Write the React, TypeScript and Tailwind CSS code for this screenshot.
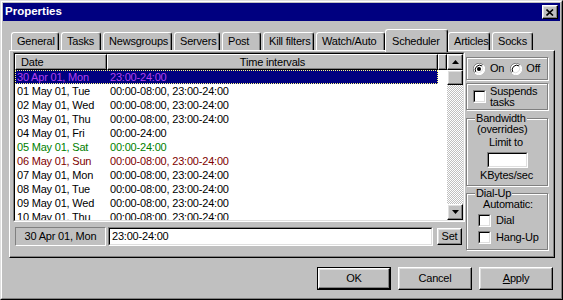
import React from "react";

const raised =
  "border border-white border-r-black border-b-black shadow-[inset_-1px_-1px_0_#808080,inset_1px_1px_0_#dfdfdf]";

type Row = { d: string; t: string; c?: string };

const rows: Row[] = [
  { d: "01 May 01, Tue", t: "00:00-08:00, 23:00-24:00" },
  { d: "02 May 01, Wed", t: "00:00-08:00, 23:00-24:00" },
  { d: "03 May 01, Thu", t: "00:00-08:00, 23:00-24:00" },
  { d: "04 May 01, Fri", t: "00:00-24:00" },
  { d: "05 May 01, Sat", t: "00:00-24:00", c: "text-[#008000]" },
  { d: "06 May 01, Sun", t: "00:00-08:00, 23:00-24:00", c: "text-[#800000]" },
  { d: "07 May 01, Mon", t: "00:00-08:00, 23:00-24:00" },
  { d: "08 May 01, Tue", t: "00:00-08:00, 23:00-24:00" },
  { d: "09 May 01, Wed", t: "00:00-08:00, 23:00-24:00" },
  { d: "10 May 01, Thu", t: "00:00-08:00, 23:00-24:00" },
];

function Check() {
  return (
    <div className="w-[13px] h-[13px] shrink-0 border border-[#808080] border-r-white border-b-white">
      <div className="w-full h-full border border-black border-r-[#dfdfdf] border-b-[#dfdfdf] bg-white" />
    </div>
  );
}

function Radio({ on }: { on?: boolean }) {
  return (
    <svg width="12" height="12" viewBox="0 0 12 12" className="shrink-0">
      <circle cx="6" cy="6" r="5.5" fill="#ffffff" />
      <path d="M10.2 2.1 A5.5 5.5 0 0 0 1.8 9.9" fill="none" stroke="#808080" strokeWidth="1" />
      <path d="M9.2 3 A4.5 4.5 0 0 0 2.8 9" fill="none" stroke="#000000" strokeWidth="1" />
      <path d="M10.2 2.1 A5.5 5.5 0 0 1 1.8 9.9" fill="none" stroke="#ffffff" strokeWidth="1" />
      <path d="M9.2 3 A4.5 4.5 0 0 1 2.8 9" fill="none" stroke="#dfdfdf" strokeWidth="1" />
      {on && <circle cx="6" cy="6" r="2" fill="#000000" />}
    </svg>
  );
}

function Arrow({ up }: { up?: boolean }) {
  return (
    <svg width="7" height="4" viewBox="0 0 7 4">
      {up ? <path d="M3.5 0 L7 4 L0 4 Z" fill="#000" /> : <path d="M0 0 L7 0 L3.5 4 Z" fill="#000" />}
    </svg>
  );
}

const tabs: { n: string; w: string; sel?: boolean }[] = [
  { n: "General", w: "w-[48px]" },
  { n: "Tasks", w: "w-[40px]" },
  { n: "Newsgroups", w: "w-[69px]" },
  { n: "Servers", w: "w-[46px]" },
  { n: "Post", w: "w-[39px]" },
  { n: "Kill filters", w: "w-[51px]" },
  { n: "Watch/Auto", w: "w-[69px]" },
  { n: "Scheduler", w: "w-[63px]", sel: true },
  { n: "Articles", w: "w-[42px]" },
  { n: "Socks", w: "w-[41px]" },
];

export default function App() {
  return (
    <div className="w-[563px] h-[300px] overflow-hidden bg-[#c0c0c0] font-['Liberation_Sans',Arial,sans-serif] text-[11px] tracking-[-0.2px] text-black border border-[#dfdfdf] border-r-black border-b-black">
      <div className="h-full border border-white border-r-[#808080] border-b-[#808080] p-px flex flex-col">
        {/* Title bar */}
        <div className="h-[18px] shrink-0 bg-[#000080] flex items-center pl-[2px] pr-[2px]">
          <span className="text-white font-bold text-[11.5px] tracking-normal leading-none">Properties</span>
          <div className={"ml-auto w-[16px] h-[14px] bg-[#c0c0c0] flex items-center justify-center " + raised}>
            <svg width="8" height="7" viewBox="0 0 8 7">
              <path d="M0.5 0.5 L7 6.5 M7 0.5 L0.5 6.5" stroke="#000" strokeWidth="1.6" />
            </svg>
          </div>
        </div>

        <div className="pl-[6px] flex flex-col">
          {/* Tabs */}
          <div className="flex items-end h-[21px] mt-[8px] pl-[2px] gap-[2px]">
            {tabs.map((t) =>
              t.sel ? (
                <div
                  key={t.n}
                  className={
                    "relative z-10 h-[23px] -mb-[2px] -mx-[2px] bg-[#c0c0c0] flex items-start pt-[3px] pl-[6px] whitespace-nowrap border-l border-t border-white border-r border-r-black rounded-t-[3px] shadow-[inset_-1px_0_0_#808080] " +
                    t.w
                  }
                >
                  {t.n}
                </div>
              ) : (
                <div
                  key={t.n}
                  className={
                    "h-[18px] flex items-center pl-[5px] whitespace-nowrap border-l border-t border-white border-r border-r-black rounded-t-[3px] shadow-[inset_-1px_0_0_#808080] " +
                    t.w
                  }
                >
                  {t.n}
                </div>
              )
            )}
          </div>

          {/* Panel */}
          <div className="w-[546px] h-[208px] border border-white border-r-black border-b-black shadow-[inset_-1px_-1px_0_#808080] pl-[3px] pt-px flex items-start">
            {/* Left column */}
            <div className="w-[452px] flex flex-col">
              {/* List view */}
              <div className="w-[452px] h-[170px] shrink-0 border border-[#808080] border-r-white border-b-white">
                <div className="h-full border border-black border-r-[#dfdfdf] border-b-[#dfdfdf] bg-white flex overflow-hidden">
                  <div className="w-[432px] h-full flex flex-col overflow-hidden">
                    <div className="h-[16px] shrink-0 flex">
                      <div className="w-[92px] h-full bg-[#c0c0c0] border border-white border-r-black border-b-black shadow-[inset_-1px_-1px_0_#808080] flex items-center pl-[5px]">
                        Date
                      </div>
                      <div className="w-[331px] h-full bg-[#c0c0c0] border border-white border-r-black border-b-black shadow-[inset_-1px_-1px_0_#808080] flex items-center justify-center">
                        Time intervals
                      </div>
                      <div className="flex-1 h-full bg-[#c0c0c0] border border-white border-r-black border-b-black shadow-[inset_-1px_-1px_0_#808080]" />
                    </div>
                    <div className="flex flex-col">
                      <div className="h-[14px] shrink-0 w-[423px] bg-[#000080] border border-dotted border-[#ffff7f] flex items-center whitespace-nowrap text-[#b040f0]">
                        <span className="w-[91px] pl-px">30 Apr 01, Mon</span>
                        <span className="pl-[3px]">23:00-24:00</span>
                      </div>
                      {rows.map((r) => (
                        <div
                          key={r.d}
                          className={"h-[14px] shrink-0 w-[423px] border border-transparent flex items-center whitespace-nowrap " + (r.c ?? "")}
                        >
                          <span className="w-[91px] pl-px">{r.d}</span>
                          <span className="pl-[3px]">{r.t}</span>
                        </div>
                      ))}
                    </div>
                  </div>
                  {/* Scrollbar */}
                  <div className="w-[16px] h-full flex flex-col">
                    <div className={"h-[16px] shrink-0 bg-[#c0c0c0] flex items-center justify-center " + raised}>
                      <Arrow up />
                    </div>
                    <div className={"h-[15px] shrink-0 bg-[#c0c0c0] " + raised} />
                    <div className="flex-1 bg-[repeating-conic-gradient(#c0c0c0_0%_25%,#ffffff_0%_50%)] bg-[length:2px_2px]" />
                    <div className={"h-[16px] shrink-0 bg-[#c0c0c0] flex items-center justify-center " + raised}>
                      <Arrow />
                    </div>
                  </div>
                </div>
              </div>

              {/* Bottom row */}
              <div className="flex mt-[5px] ml-[2px] items-start">
                <div className="w-[91px] h-[19px] border border-[#808080] border-r-white border-b-white flex items-center justify-center">
                  30 Apr 01, Mon
                </div>
                <div className="ml-[2px] w-[325px] h-[19px] border border-[#808080] border-r-white border-b-white">
                  <div className="w-full h-full border border-black border-r-[#dfdfdf] border-b-[#dfdfdf] bg-white flex items-center pl-[2px]">
                    23:00-24:00
                  </div>
                </div>
                <div className={"ml-[4px] mt-px w-[25px] h-[17px] flex items-center justify-center " + raised}>Set</div>
              </div>
            </div>

            {/* Right column */}
            <div className="ml-px w-[82px] mt-[5px] flex flex-col">
              <div className="h-[23px] border border-[#808080] shadow-[inset_1px_1px_0_#fff,1px_1px_0_#fff] flex items-center pl-[6px]">
                <Radio on />
                <span className="ml-[5px]">On</span>
                <span className="ml-[6px] flex">
                  <Radio />
                </span>
                <span className="ml-[4px]">Off</span>
              </div>
              <div className="mt-[3px] h-[27px] border border-[#808080] shadow-[inset_1px_1px_0_#fff,1px_1px_0_#fff] flex items-center pl-[6px]">
                <Check />
                <div className="ml-[4px] leading-[11px]">
                  Suspends
                  <br />
                  tasks
                </div>
              </div>
              <div className="relative mt-[8px] h-[68px] border border-[#808080] shadow-[inset_1px_1px_0_#fff,1px_1px_0_#fff] flex flex-col items-start pt-[4px] leading-[13px]">
                <span className="absolute left-[8px] -top-[7px] bg-[#c0c0c0] px-px">Bandwidth</span>
                <span className="ml-[10px]">(overrides)</span>
                <span className="ml-[22px]">Limit to</span>
                <div className="ml-[20px] mt-[3px] w-[41px] h-[16px] border border-[#808080] border-r-white border-b-white">
                  <div className="w-full h-full border border-black border-r-[#dfdfdf] border-b-[#dfdfdf] bg-white" />
                </div>
                <span className="ml-[13px] mt-px">KBytes/sec</span>
              </div>
              <div className="relative mt-[7px] h-[57px] border border-[#808080] shadow-[inset_1px_1px_0_#fff,1px_1px_0_#fff] flex flex-col items-start pt-[4px] leading-[13px]">
                <span className="absolute left-[8px] -top-[7px] bg-[#c0c0c0] px-px">Dial-Up</span>
                <span className="ml-[16px]">Automatic:</span>
                <div className="ml-[11px] mt-[3px] flex items-center">
                  <Check />
                  <span className="ml-[5px]">Dial</span>
                </div>
                <div className="ml-[11px] mt-[4px] flex items-center">
                  <Check />
                  <span className="ml-[5px]">Hang-Up</span>
                </div>
              </div>
            </div>
          </div>

          {/* Dialog buttons */}
          <div className="flex justify-end gap-[7px] mt-[9px] pr-[7px]">
            <div className="w-[74px] h-[23px] border border-black">
              <div className={"w-full h-full flex items-center justify-center " + raised}>OK</div>
            </div>
            <div className={"w-[74px] h-[23px] flex items-center justify-center " + raised}>Cancel</div>
            <div className={"w-[74px] h-[23px] flex items-center justify-center " + raised}>
              <span>
                <span className="underline">A</span>pply
              </span>
            </div>
          </div>
        </div>
      </div>
    </div>
  );
}
